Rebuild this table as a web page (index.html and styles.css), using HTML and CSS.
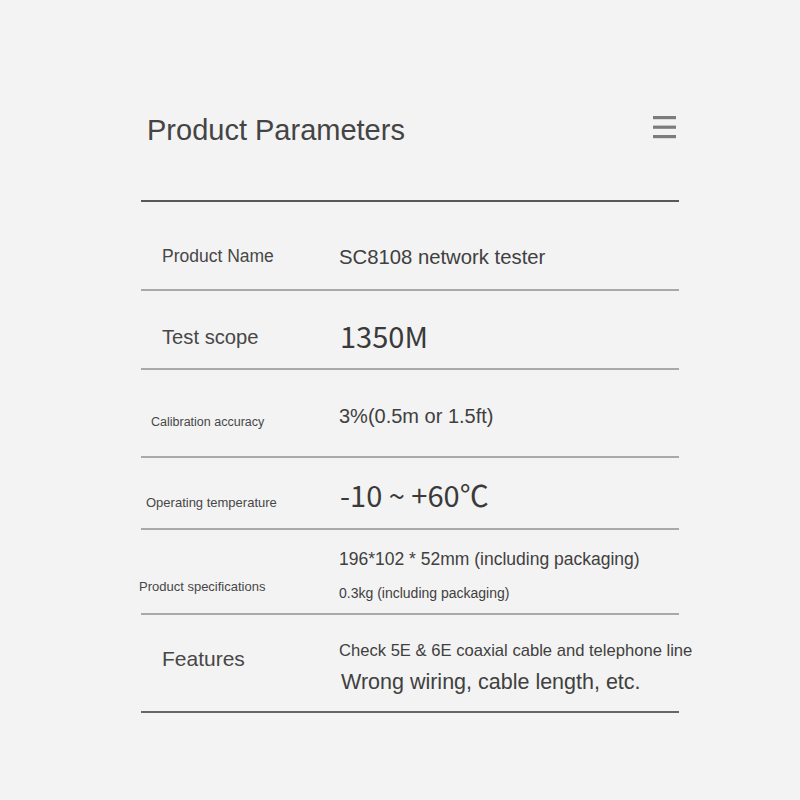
FILE: index.html
```html
<!DOCTYPE html>
<html lang="en">
<head>
<meta charset="utf-8">
<title>Product Parameters</title>
<link rel="stylesheet" href="styles.css">
</head>
<body>
<div class="page">
  <header class="header">
    <h1 class="title">Product Parameters</h1>
    <svg class="menu" width="23" height="23" viewBox="0 0 23 23" aria-hidden="true">
      <rect x="0" y="0" width="23" height="3.2" fill="#7c7c7c"/>
      <rect x="0" y="9.6" width="23" height="3.2" fill="#7c7c7c"/>
      <rect x="0" y="19" width="23" height="3.2" fill="#7c7c7c"/>
    </svg>
  </header>

  <div class="row row-1">
    <div class="label l-name">Product Name</div>
    <div class="value v-name">SC8108 network tester</div>
  </div>

  <div class="row row-2">
    <div class="label l-scope">Test scope</div>
    <div class="value v-scope">1350M</div>
  </div>

  <div class="row row-3">
    <div class="label l-cal">Calibration accuracy</div>
    <div class="value v-cal">3%(0.5m or 1.5ft)</div>
  </div>

  <div class="row row-4">
    <div class="label l-temp">Operating temperature</div>
    <div class="value v-temp">-10 ~ +60℃</div>
  </div>

  <div class="row row-5">
    <div class="label l-spec">Product specifications</div>
    <div class="value v-spec">
      <div class="spec-size">196*102 * 52mm (including packaging)</div>
      <div class="spec-weight">0.3kg (including packaging)</div>
    </div>
  </div>

  <div class="row row-6">
    <div class="label l-feat">Features</div>
    <div class="value v-feat">
      <div class="feat-1">Check 5E &amp; 6E coaxial cable and telephone line</div>
      <div class="feat-2">Wrong wiring, cable length, etc.</div>
    </div>
  </div>
</div>
</body>
</html>
```

FILE: styles.css
```css
html, body {
  margin: 0;
  padding: 0;
  background: #f3f3f3;
}

body {
  font-family: "Liberation Sans", Arial, sans-serif;
  color: #444444;
  width: 800px;
  height: 800px;
  overflow: hidden;
}

.page {
  margin-left: 141px;
  width: 538px;
}

.header {
  box-sizing: border-box;
  height: 202px;
  padding-top: 116px;
  border-bottom: 2px solid #585858;
  display: flex;
  justify-content: space-between;
  align-items: flex-start;
}

.title {
  margin: 0 0 0 6px;
  font-size: 29px;
  line-height: 1;
  font-weight: normal;
  color: #444444;
}

.menu {
  display: block;
  margin-right: 3px;
  margin-top: 0;
}

.row {
  box-sizing: border-box;
  display: flex;
  align-items: flex-start;
  border-bottom: 2px solid #a9a9a9;
  white-space: nowrap;
}

.row-1 { height: 89px; }
.row-2 { height: 79px; }
.row-3 { height: 88px; }
.row-4 { height: 72px; }
.row-5 { height: 85px; }
.row-6 { height: 98px; border-bottom-color: #666666; }

.label {
  width: 198px;
  flex: none;
  box-sizing: border-box;
  line-height: 1;
  color: #474747;
}

.value {
  line-height: 1;
  color: #404040;
}

/* row 1 */
.l-name { font-size: 17.5px; padding-left: 21px; margin-top: 46px; }
.v-name { font-size: 20.3px; margin-top: 45px; }

/* row 2 */
.l-scope { font-size: 20.2px; padding-left: 21px; margin-top: 36px; }
.v-scope {
  font-family: "Noto Sans CJK SC", "Noto Sans", sans-serif;
  font-size: 29px;
  margin-top: 30px;
  margin-left: 1px;
  color: #3a3a3a;
}

/* row 3 */
.l-cal { font-size: 12.5px; padding-left: 10px; margin-top: 46px; }
.v-cal { font-size: 20px; margin-top: 36px; }

/* row 4 */
.l-temp { font-size: 13px; padding-left: 5px; margin-top: 38px; }
.v-temp {
  font-family: "Noto Sans CJK SC", "Noto Sans", sans-serif;
  font-size: 29px;
  margin-top: 22px;
  margin-left: 1px;
  color: #3a3a3a;
}

/* row 5 */
.l-spec { font-size: 13px; width: 200px; margin-left: -2px; margin-top: 50px; }
.v-spec { margin-top: 21px; }
.spec-size { font-size: 17.5px; }
.spec-weight { font-size: 14px; margin-top: 17px; }

/* row 6 */
.l-feat { font-size: 21px; padding-left: 21px; margin-top: 33px; }
.v-feat { margin-top: 28px; }
.feat-1 { font-size: 16.6px; }
.feat-2 { font-size: 21.5px; margin-top: 12px; margin-left: 2px; }
```
